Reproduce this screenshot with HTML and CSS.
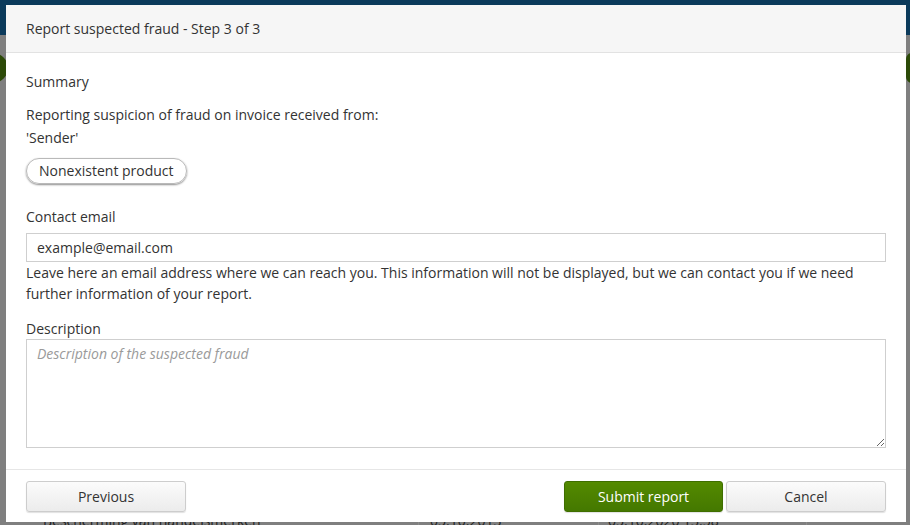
FILE: index.html
```html
<!DOCTYPE html>
<html lang="en">
<head>
    <meta charset="UTF-8">
    <meta name="viewport" content="width=device-width, initial-scale=1.0">
    <title>Report suspected fraud</title>
    <link rel="stylesheet" href="styles.css">
</head>
<body>
    <div id="page">
        <div class="topbar"></div>
        <div class="page-content">
            <div class="side-dot left"></div>
            <div class="side-dot right"></div>
            <div class="row">
                <span class="cell name">Bescherming van handelsmerken</span>
                <span class="cell date">05.10.2013</span>
                <span class="cell time">05.10.2020 13:58</span>
            </div>
        </div>
    </div>

    <div class="modal">
        <div class="modal-header">Report suspected fraud - Step 3 of 3</div>
        <div class="modal-body">
            <div class="section-title">Summary</div>
            <div class="summary-text">Reporting suspicion of fraud on invoice received from:</div>
            <div class="sender">'Sender'</div>
            <span class="pill">Nonexistent product</span>

            <label class="field-label" for="email">Contact email</label>
            <input id="email" class="text-input" type="text" value="example@email.com">
            <div class="help">Leave here an email address where we can reach you. This information will not be displayed, but we can contact you if we need further information of your report.</div>

            <label class="field-label desc" for="desc">Description</label>
            <textarea id="desc" class="text-area" placeholder="Description of the suspected fraud"></textarea>
        </div>
        <div class="modal-footer">
            <button class="btn">Previous</button>
            <div class="spacer"></div>
            <button class="btn btn-primary">Submit report</button>
            <button class="btn">Cancel</button>
        </div>
    </div>
</body>
</html>
```

FILE: styles.css
```css
body {
    margin: 0;
    padding: 0;
    font-family: "Open Sans", sans-serif;
    font-size: 14px;
    color: #333;
    background: #7f7f7f;
    overflow: hidden;
}

/* page behind the overlay */
.topbar {
    height: 35px;
    background: #0b3a5b;
}

.page-content {
    position: relative;
    height: 490px;
    background: #7f7f7f;
}

.side-dot {
    position: absolute;
    top: 18px;
    width: 30px;
    height: 30px;
    border-radius: 50%;
    background: #2c4a08;
}

.side-dot.left {
    left: -22px;
}

.side-dot.right {
    right: -26px;
    border-radius: 6px;
}

.row {
    display: flex;
    padding-top: 475px;
    color: #1e1e1e;
    line-height: 21px;
}

.cell {
    flex: none;
    border-right: 1px solid #8c8c8c;
}

.name {
    width: 375px;
    padding-left: 43px;
}

.date {
    width: 168px;
    padding-left: 11px;
}

.time {
    width: 198px;
    padding-left: 9px;
}

/* modal */
.modal {
    position: fixed;
    top: 5px;
    left: 6px;
    width: 900px;
    background: #fff;
}

.modal-header {
    height: 47px;
    line-height: 48px;
    padding: 0 20px;
    background: #f6f6f6;
    border-bottom: 1px solid #e2e2e2;
}

.modal-body {
    display: flex;
    flex-direction: column;
    align-items: flex-start;
    padding: 18px 20px 21px;
    line-height: 21px;
    border-bottom: 1px solid #e6e6e6;
}

.summary-text {
    margin-top: 12px;
}

.sender {
    margin-top: 2px;
}

.pill {
    margin-top: 10px;
    padding: 0 12px;
    height: 24px;
    line-height: 24px;
    border: 1px solid #b9b9b9;
    border-radius: 13px;
    box-shadow: 0 1px 2px rgba(0, 0, 0, 0.45);
}

.field-label {
    margin-top: 22px;
}

.field-label.desc {
    margin-top: 14px;
}

.text-input {
    margin-top: 6px;
    box-sizing: border-box;
    width: 860px;
    height: 29px;
    padding: 0 10px;
    border: 1px solid #cfcfcf;
    font-family: "Open Sans", sans-serif;
    font-size: 14px;
    color: #333;
    outline: none;
}

.help {
    width: 860px;
}

.text-area {
    box-sizing: border-box;
    width: 860px;
    height: 109px;
    padding: 3px 10px;
    border: 1px solid #cfcfcf;
    font-family: "Open Sans", sans-serif;
    font-size: 14px;
    line-height: 21px;
    color: #333;
    outline: none;
}

.text-area::placeholder {
    color: #9a9a9a;
    font-style: italic;
}

.modal-footer {
    display: flex;
    gap: 3px;
    padding: 11px 20px 10px;
}

.spacer {
    flex: 1;
}

.btn {
    width: 160px;
    height: 31px;
    border: 1px solid #cdcdcd;
    border-radius: 3px;
    background: linear-gradient(#fbfbfb, #ececec);
    box-shadow: 0 1px 1px rgba(0, 0, 0, 0.12);
    font-family: "Open Sans", sans-serif;
    font-size: 14px;
    color: #333;
    padding: 0;
}

.btn-primary {
    width: 159px;
    border-color: #3f6e00;
    background: linear-gradient(#548a00, #447800);
    color: #fff;
}
```
